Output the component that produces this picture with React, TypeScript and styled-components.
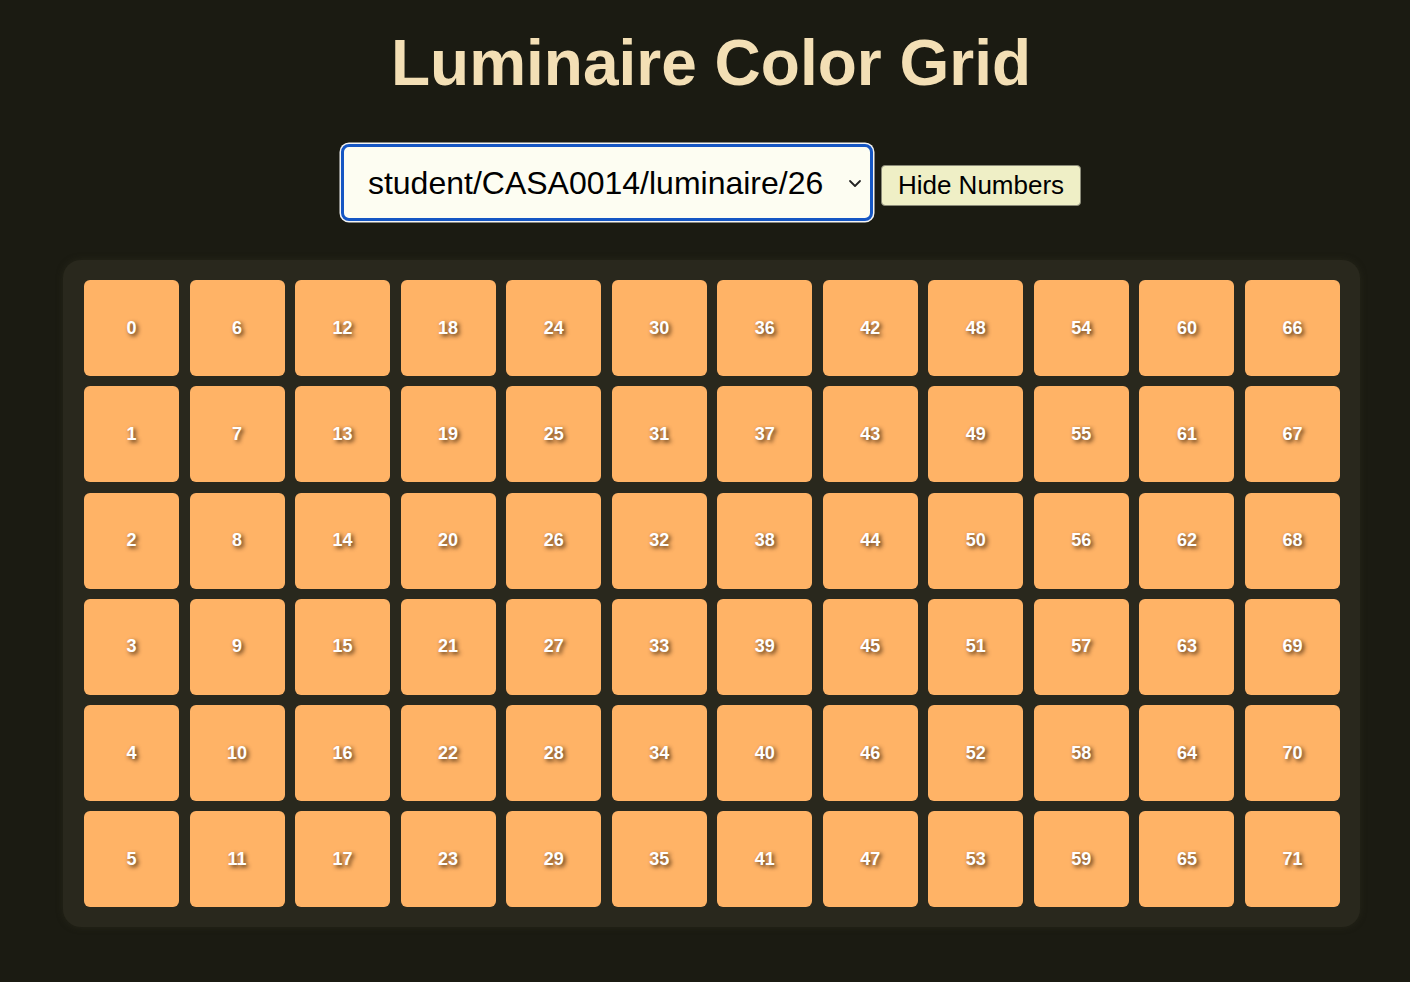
import React, { useState } from "react";
import styled, { createGlobalStyle } from "styled-components";

const Global = createGlobalStyle`
  html, body {
    margin: 0;
    padding: 0;
    background: #1b1b12;
    overflow-x: hidden;
  }
  body {
    font-family: "Liberation Sans", Arial, Helvetica, sans-serif;
  }
`;

const Page = styled.div`
  width: 1410px;
  min-height: 982px;
  box-sizing: border-box;
  padding-left: 12px;
  display: flex;
  flex-direction: column;
  align-items: stretch;
  background: #1b1b12;
`;

const Title = styled.h1`
  margin: 26px 0 0;
  text-align: center;
  font-size: 64px;
  font-weight: 700;
  line-height: normal;
  color: #f3dfb5;
`;

const Controls = styled.div`
  margin-top: 44px;
  display: flex;
  justify-content: center;
  align-items: baseline;
  gap: 8px;
`;

const SelectWrap = styled.div`
  position: relative;
  display: inline-flex;
`;

const Select = styled.select`
  appearance: none;
  -webkit-appearance: none;
  width: 532px;
  height: 77px;
  box-sizing: border-box;
  padding: 0 28px 0 24px;
  font-family: "Liberation Sans", Arial, sans-serif;
  font-size: 32px;
  color: #000;
  background: #fdfdf2;
  border: 3px solid #1556c4;
  border-radius: 8px;
  box-shadow: 0 0 0 1.5px #f4f4f4;
  outline: none;
`;

const Chevron = styled.svg`
  position: absolute;
  right: 10px;
  top: 50%;
  transform: translateY(-50%);
  width: 16px;
  height: 16px;
  pointer-events: none;
`;

const Button = styled.button`
  font-family: "Liberation Sans", Arial, sans-serif;
  font-size: 26px;
  line-height: 30px;
  padding: 4px 16px 5px 16px;
  color: #000;
  background: #efefc6;
  border: 1px solid #8a8a78;
  border-radius: 4px;
  cursor: pointer;
`;

const Panel = styled.div`
  margin: 39px 50px 0 51px;
  padding: 20px 20px 20px 21px;
  background: #29281d;
  border-radius: 18px;
  box-shadow: 0 0 6px rgba(40, 40, 28, 0.8);
  display: grid;
  grid-template-columns: repeat(12, 1fr);
  column-gap: 10.5px;
  row-gap: 10.3px;
  grid-auto-rows: 96px;
`;

const Cell = styled.div<{ $color: string }>`
  background: ${(p) => p.$color};
  border-radius: 6px;
  display: flex;
  align-items: center;
  justify-content: center;
  color: #ffffff;
  font-family: "Liberation Sans", Arial, sans-serif;
  font-weight: 700;
  font-size: 18px;
  text-shadow: 2px 2px 4px rgba(40, 20, 0, 0.85);
`;

export default function App() {
  const [show, setShow] = useState(true);
  const cells: number[] = [];
  for (let r = 0; r < 6; r++) {
    for (let c = 0; c < 12; c++) {
      cells.push(c * 6 + r);
    }
  }
  return (
    <>
      <Global />
      <Page>
        <Title>Luminaire Color Grid</Title>
        <Controls>
          <SelectWrap>
            <Select defaultValue="26">
              <option value="26">student/CASA0014/luminaire/26</option>
            </Select>
            <Chevron viewBox="0 0 16 16">
              <path d="M3 6 L8 11 L13 6" fill="none" stroke="#222" strokeWidth="1.8" strokeLinecap="round" strokeLinejoin="round" />
            </Chevron>
          </SelectWrap>
          <Button onClick={() => setShow(!show)}>{show ? "Hide Numbers" : "Show Numbers"}</Button>
        </Controls>
        <Panel>
          {cells.map((n) => (
            <Cell key={n} $color="#ffb366">
              {show ? n : ""}
            </Cell>
          ))}
        </Panel>
      </Page>
    </>
  );
}
